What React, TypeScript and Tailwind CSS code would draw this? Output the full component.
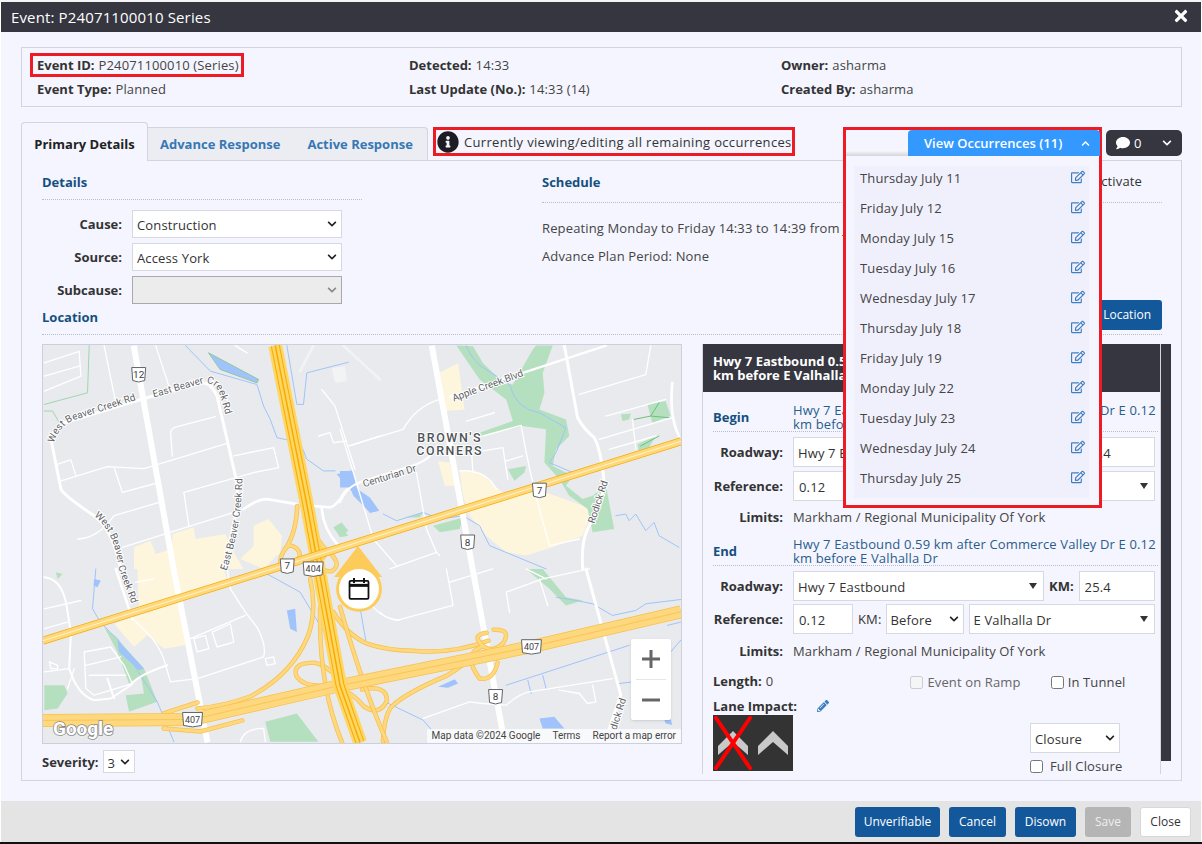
import { ReactNode } from 'react';
import { FaChevronDown, FaChevronUp, FaComment, FaInfoCircle, FaPencilAlt, FaRegEdit, FaTimes } from 'react-icons/fa';

const occurrences = [
    'Thursday July 11',
    'Friday July 12',
    'Monday July 15',
    'Tuesday July 16',
    'Wednesday July 17',
    'Thursday July 18',
    'Friday July 19',
    'Monday July 22',
    'Tuesday July 23',
    'Wednesday July 24',
    'Thursday July 25',
];

const Select = ({ value, arrow = 'chevron', disabled = false, className }: { value: string; arrow?: 'chevron' | 'triangle'; disabled?: boolean; className: string }) => (
    <div className={`relative shrink-0 ${className}`}>
        <select
            disabled={disabled}
            value={value}
            onChange={() => {}}
            className={`w-full h-full appearance-none rounded-none pl-[4px] pt-[2px] outline-none text-[#333] border-[1.5px] ${disabled ? 'bg-[#ececec] border-[#a9a9a9]' : 'bg-white border-[#d6d8e2]'}`}
        >
            <option value={value}>{value}</option>
        </select>
        {arrow === 'chevron' ? (
            <FaChevronDown className={`absolute right-[5px] top-1/2 -translate-y-1/2 pointer-events-none text-[10px] ${disabled ? 'text-[#888]' : 'text-[#222]'}`} />
        ) : (
            <span className="absolute right-[7px] top-1/2 -translate-y-1/2 pointer-events-none w-0 h-0 border-x-[4px] border-x-transparent border-t-[6px] border-t-[#333]" />
        )}
    </div>
);

const TextInput = ({ value, className }: { value: string; className: string }) => (
    <input readOnly value={value} className={`shrink-0 bg-white border-[1.5px] border-[#d6d8e2] px-[5px] pt-[2px] text-[#333] outline-none ${className}`} />
);

const Label = ({ children }: { children: ReactNode }) => (
    <span className="w-[70px] mr-[10px] shrink-0 text-right font-bold tracking-normal text-[#333]">{children}</span>
);

const SectionTitle = ({ children }: { children: ReactNode }) => (
    <span className="font-bold tracking-normal text-[#14507f]">{children}</span>
);

const Field = ({ label, value, className = 'h-[24px]' }: { label: string; value: string; className?: string }) => (
    <div className={`flex items-center ${className}`}>
        <span className="font-bold tracking-normal text-[#333] mr-[4px]">{label}</span>
        <span className="text-[#444]">{value}</span>
    </div>
);

const ActionButton = ({ children, className }: { children: ReactNode; className: string }) => (
    <button className={`h-[30px] rounded-[3px] text-[12px] tracking-normal ${className}`}>{children}</button>
);

// Map drawing. Each group takes coordinates traced at 3x from one part of the map.
const Part = ({ x, y, children }: { x: number; y: number; children: ReactNode }) => (
    <g transform={`translate(${x},${y}) scale(0.3333)`} fill="none" stroke="#fff" strokeWidth={4} strokeLinejoin="round" strokeLinecap="round">
        {children}
    </g>
);

const GREEN = '#b5e0bf';
const WATER = '#a0c3fb';
const URBAN = '#fdf5dc';

const Shield = ({ x, y, label, wide = false }: { x: number; y: number; label: string; wide?: boolean }) => {
    const w = wide ? 10 : 7;
    return (
        <g transform={`translate(${x},${y})`}>
            <path d={`M${-w},-7 H${w} L${w - 1},6 Q0,9 ${-w + 1},6 Z`} fill="#fff" stroke="#5f6368" strokeWidth={1} />
            <text y={3.5} textAnchor="middle" fontSize={wide ? 9 : 10} fill="#3c4043" fontFamily="Roboto, sans-serif">{label}</text>
        </g>
    );
};

const RoadLabel = ({ x, y, angle, children }: { x: number; y: number; angle: number; children: string }) => (
    <text
        transform={`translate(${x},${y}) rotate(${angle})`}
        fontSize={10}
        fill="#5f6368"
        stroke="#fff"
        strokeWidth={2}
        paintOrder="stroke"
        fontFamily="Roboto, sans-serif"
    >
        {children}
    </text>
);

const PathLabel = ({ id, d, children }: { id: string; d: string; children: string }) => (
    <>
        <path id={id} d={d} fill="none" />
        <text fontSize={10} fill="#5f6368" stroke="#fff" strokeWidth={2} paintOrder="stroke" fontFamily="Roboto, sans-serif">
            <textPath href={`#${id}`}>{children}</textPath>
        </text>
    </>
);

const Ramp = ({ d }: { d: string }) => (
    <>
        <path d={d} fill="none" stroke="#f9c04a" strokeWidth={4.5} strokeLinecap="round" />
        <path d={d} fill="none" stroke="#fdd87e" strokeWidth={3} strokeLinecap="round" />
    </>
);

const MapArt = () => (
    <svg viewBox="0 0 640 398" className="block w-full h-full bg-[#e8eaed] tracking-normal">
        <Part x={-2} y={-6}>
            <path d="M395,585 L460,565 L465,600 L555,585 L580,640 L610,690 L280,690 L280,625 L330,605 L345,645 L395,630 Z" fill={URBAN} stroke="none" />
            <path d="M640,560 L685,540 L725,590 L720,640 L670,690 L600,660 L640,620 Z" fill={URBAN} stroke="none" />
            <path d="M875,85 L915,80 L920,125 L885,130 Z" fill="#f1f3f4" stroke="none" />
            <path d="M780,95 L820,18 M910,18 L1020,120" stroke="#f1f3f4" strokeWidth={8} />
            <path d="M145,18 L140,160 L10,195 M10,215 L35,215 L55,250" stroke="#9fd6ac" strokeWidth={3} />
            <path d="M505,40 L655,120 L650,130 L540,90 Z" fill={WATER} stroke="#8fc79c" strokeWidth={3} />
            <path d="M435,18 L510,95 L650,135 L670,200 L690,240 L710,295 L780,310 L800,360 L850,395 L885,395 M740,18 L770,195 L790,195 L800,100 L925,68" stroke={WATER} strokeWidth={3} />
            <path d="M890,405 L935,393 L945,445 L990,475 L1018,515 L990,522 L950,470 L925,445 Z" fill={WATER} stroke="none" />
            <path d="M880,565 L905,550 L925,575 L900,595 Z" fill={GREEN} stroke="none" />
            <path d="M60,425 L200,382 L310,388 L560,312 M395,350 L390,280 Q392,265 410,262 L525,232 M580,350 L700,325 L715,385 L640,400 L430,460 L445,560 M245,625 L580,520 M110,600 Q170,600 220,530 L355,490 M190,18 L225,190 M345,18 L385,140 M220,385 L245,460 L355,430 M10,70 L115,35 L120,110 L10,155 M10,110 L115,80 M845,150 L885,200 L945,390 M930,320 L1020,290 M835,290 L870,280 L880,310 L920,305 M50,375 L90,362 L105,410 M585,18 L620,40" />
            <path d="M30,300 L60,450 Q70,470 160,530 Q215,570 240,690" strokeWidth={9} />
            <path d="M30,300 Q40,265 70,250 L300,180 L480,130 Q510,125 530,170 L585,410 Q600,480 585,530 L550,690" strokeWidth={9} />
            <path d="M610,510 Q650,480 680,480 L770,495 M810,500 L870,505 Q890,500 910,465 Q930,430 1020,415 M845,510 Q850,570 895,620" strokeWidth={8} />
        </Part>
        <Part x={298} y={-6}>
            <path d="M360,395 L420,400 L490,460 L620,460 L760,510 L730,590 L640,625 L560,650 L500,640 L440,590 L390,530 L370,470 Z" fill={URBAN} stroke="none" />
            <path d="M300,100 L355,70 L375,210 L320,215 Z M295,365 L330,370 L345,440 L315,440 Z" fill={URBAN} stroke="none" />
            <path d="M350,18 L400,20 L430,70 L490,130 L520,135 L580,30 L590,18 L640,18 L610,100 L615,160 L600,210 L680,240 L690,290 L650,330 L640,380 L700,410 L680,440 L730,480 L760,470 L800,440 L825,570 L760,580 L745,510 L690,470 L660,420 L615,370 L620,270 L550,260 L430,290 L420,280 L520,245 L500,180 L420,120 Z" fill={GREEN} stroke="none" />
            <path d="M925,195 L980,185 L995,230 L940,250 Z M895,315 L950,290 L930,325 L900,340 Z M505,390 L560,380 L555,400 L525,425 Z M280,560 L370,535 L360,570 L300,580 Z M195,535 L250,520 L240,535 Z M0,560 L25,590 L0,595 Z M845,225 L875,222 L870,240 L850,245 Z" fill={GREEN} stroke="none" />
            <path d="M885,240 L935,230 L960,190 M935,230 L990,235 M905,320 L960,290" stroke="#6cc17f" strokeWidth={3} />
            <path d="M380,18 Q400,70 440,90 L510,135 Q530,210 600,220 L680,265 L650,340 L630,370 L700,400 M130,525 L170,545 L250,520 L300,540 L370,530 L420,560 L450,620 L620,690 M830,530 L860,525 L870,545 L890,525 L920,575 L945,550 L960,590 L1020,625" stroke={WATER} strokeWidth={3} />
            <path d="M0,395 L40,395 L50,445 L115,515 L90,520 L40,470 L30,445 L0,445 Z" fill={WATER} stroke="none" />
            <path d="M25,320 L190,270 Q230,200 300,180 M430,290 L545,258 Q570,400 600,510 L630,620 L720,600 M360,395 Q440,390 470,450 M430,335 L490,325 L505,420 M500,365 L550,350 M720,165 L920,105 L935,18 M380,245 L465,220 M150,690 L290,640 L300,650 M780,300 L1000,235 M810,330 L950,290 M800,230 L980,180 M880,240 L890,330 M0,270 L40,400 L100,600 L170,680 M230,400 L260,570 L290,640 M395,330 L400,400" />
            <path d="M330,172 L800,18" strokeWidth={7} />
            <path d="M0,490 Q20,440 70,425 L230,375 Q270,360 285,330" strokeWidth={6} />
            <path d="M675,18 Q690,100 715,235 Q730,265 765,295 Q785,330 795,430 Q790,490 745,570 Q725,610 730,690" strokeWidth={9} />
            <path d="M1000,130 Q990,230 1020,290" strokeWidth={8} />
        </Part>
        <Part x={-42} y={224}>
            <path d="M410,0 L670,0 L685,45 L415,130 Z M340,165 L530,100 L555,230 L490,240 L440,200 L400,235 Z" fill={URBAN} stroke="none" />
            <path d="M310,175 L350,210 L430,300 L470,400 L385,430 L375,380 L430,375 L420,320 L385,345 L350,250 Z M130,350 L190,350 L200,375 L170,420 L130,425 Z M795,460 L890,435 L955,520 L810,520 Z M165,10 L185,15 L170,30 Z" fill={GREEN} stroke="none" />
            <path d="M350,215 L430,300 L415,305 L355,250 Z M860,125 L885,120 L890,190 L870,180 Z M280,30 L300,35 L290,55 L278,50 Z" fill={WATER} stroke="none" />
            <path d="M285,0 L275,120 Q300,170 350,210 L470,400 L520,520 M800,15 L900,70 L960,170 L1000,240 M1060,0 L1100,230" stroke={WATER} strokeWidth={3} />
            <path d="M130,120 L240,95 M130,180 L200,160 M205,300 L130,310 M250,250 L330,235 L370,290 L395,345 L280,380 L255,360 Z M255,290 L360,265 M265,320 L375,320 M735,140 L570,210 M580,210 L615,200 L625,240 L590,250 Z M635,190 L690,165 L700,220 L650,235 Z M795,270 L820,265 L825,285 L800,290 Z M405,40 L460,30 M720,520 Q730,480 790,480 L795,520 M1120,115 Q1150,150 1200,155 M220,300 L200,360 M145,280 L170,290 L170,300 L150,300 Z M395,150 Q480,220 495,290 L510,340 L590,330 L790,265 Q800,230 770,175 L735,130 L690,60 L680,0" />
            <path d="M130,25 Q180,30 195,100 L210,190 L205,300 Q230,380 280,395 L330,390 L390,350 Q410,320 500,290" strokeWidth={6} />
            <path d="M345,0 L395,150" strokeWidth={8} />
            <path d="M320,330 L340,390" strokeWidth={6} />
        </Part>
        <Part x={338} y={224}>
            <path d="M440,0 L490,0 L560,85 L610,95 L560,110 L510,60 Z" fill={GREEN} stroke="none" />
            <path d="M175,355 L225,332 L235,345 L205,358 Z M480,450 L525,445 L555,480 L490,480 Z M855,452 L875,450 L880,470 L860,465 Z" fill={WATER} stroke="none" />
            <path d="M530,85 L590,95 L640,105 L700,140 L770,125 L800,105 L905,92 M865,170 L905,160 M380,350 L750,230 M445,335 L455,375 M490,320 L500,360 M720,345 L760,340 M875,250 L905,215 M15,400 L130,455 L160,490" stroke={WATER} strokeWidth={3} />
            <path d="M200,0 L220,110 L50,155 Q20,150 0,130 M210,40 L340,0 M380,70 L490,30 L630,0 M380,70 L390,130 M480,30 L505,110 M440,0 L500,30 M130,450 L270,400 L310,405 L380,410 Q420,375 450,370 L700,330 M540,365 L600,375 L625,405 L650,400 L640,350" />
            <path d="M620,0 L725,380 L690,480" strokeWidth={9} />
        </Part>
        {/* white trunk roads */}
        <path d="M91,0 L131,224 L165,398" fill="none" stroke="#fff" strokeWidth={6} />
        <path d="M390,0 L431,224 L463,398" fill="none" stroke="#fff" strokeWidth={6} />
        {/* ramps */}
        <Ramp d="M255,161 Q254,190 241,207 Q232,226 250,219 Q262,212 255,204 Q246,196 241,207" />
        <Ramp d="M266,161 Q270,195 288,208 Q300,220 290,226 Q276,228 280,214 Q284,206 296,204" />
        <Ramp d="M268,234 Q275,265 266,291 Q250,330 208,352 Q180,362 155,364" />
        <Ramp d="M291,267 Q305,290 325,299 Q345,306 371,306 Q410,310 447,296" />
        <Ramp d="M341,397 Q342,375 348,364 Q360,350 405,331 Q420,322 428,314" />
        <Ramp d="M121,384 L158,387 L200,376" />
        <Ramp d="M121,369 L155,358" />
        <Ramp d="M272,318 Q250,318 254,331 Q262,345 296,340 M272,318 Q284,320 296,334" />
        <Ramp d="M320,345 Q345,340 345,356 Q338,372 322,362 Q312,350 300,345" />
        <Ramp d="M452,285 Q470,284 462,298 Q450,310 440,300 Q430,290 445,288 M440,302 Q420,310 438,334 Q452,336 456,318" />
        <Ramp d="M298,262 Q320,340 345,398 M278,262 Q276,340 300,398" />
        {/* 407 */}
        <path d="M0,376 L150,375 L298,341 L490,302 L640,267" fill="none" stroke="#f9c04a" strokeWidth={13} strokeLinejoin="round" />
        <path d="M0,376 L150,375 L298,341 L490,302 L640,267" fill="none" stroke="#fdd87e" strokeWidth={11.5} strokeLinejoin="round" />
        <path d="M0,376 L150,375 L298,341 L490,302 L640,267" fill="none" stroke="#f9c04a" strokeWidth={0.8} />
        {/* 404 */}
        <path d="M233,0 L265,161 L298,341 L318,398" fill="none" stroke="#fdd663" strokeWidth={14} strokeLinejoin="round" />
        <path d="M233,0 L265,161 L298,341 L318,398" fill="none" stroke="#f9ab00" strokeWidth={9} strokeLinejoin="round" />
        <path d="M233,0 L265,161 L298,341 L318,398" fill="none" stroke="#fdd663" strokeWidth={7} strokeLinejoin="round" />
        <path d="M233,0 L265,161 L298,341 L318,398" fill="none" stroke="#f9ab00" strokeWidth={1.5} strokeLinejoin="round" />
        {/* 7 */}
        <path d="M0,296 L640,96" fill="none" stroke="#f9ab00" strokeWidth={8} />
        <path d="M0,296 L640,96" fill="none" stroke="#fdd87e" strokeWidth={6.5} />
        <path d="M0,296 L640,96" fill="none" stroke="#fff3c4" strokeWidth={1} />
        <Shield x={96} y={29} label="12" />
        <Shield x={245} y={221} label="7" />
        <Shield x={271} y={224} label="404" wide />
        <Shield x={498} y={145} label="7" />
        <Shield x={426} y={197} label="8" />
        <Shield x={150} y={375} label="407" wide />
        <Shield x={490} y={302} label="407" wide />
        <Shield x={454} y={352} label="8" />
        <PathLabel id="wbc1" d="M11,98 Q15,82 30,75 L95,54">West Beaver Creek Rd</PathLabel>
        <PathLabel id="ebc1" d="M111,52 L160,38 Q172,36 177,48 L187,82">East Beaver Creek Rd</PathLabel>
        <PathLabel id="ebc2" d="M184,226 Q200,180 200,130">East Beaver Creek Rd</PathLabel>
        <PathLabel id="wbc2" d="M51,171 Q72,186 76,224 L90,262">West Beaver Creek Rd</PathLabel>
        <RoadLabel x={412} y={56} angle={-20}>Apple Creek Blvd</RoadLabel>
        <RoadLabel x={322} y={142} angle={-17}>Centurian Dr</RoadLabel>
        <RoadLabel x={553} y={179} angle={-72}>Rodick Rd</RoadLabel>
        <RoadLabel x={575} y={386} angle={-72}>dick Rd</RoadLabel>
        <g fontFamily="Roboto, sans-serif" fontSize={12.5} fontWeight={500} fill="#4f5357" stroke="#fff" strokeWidth={2} paintOrder="stroke" textAnchor="middle" letterSpacing={1.6}>
            <text x={408} y={97}>BROWN'S</text>
            <text x={408} y={110}>CORNERS</text>
        </g>
        <text x={10} y={391} fontFamily="Roboto, sans-serif" fontSize={19} fontWeight={700} fill="#fff" stroke="#8a8a8a" strokeWidth={1.6} paintOrder="stroke">Google</text>
        {/* event marker */}
        <path d="M316,201 L292,232 H340 Z" fill="#fdcb59" />
        <circle cx={317} cy={244} r={21.5} fill="#fff" stroke="#fdcb59" strokeWidth={3} />
        <g fill="none" stroke="#111" strokeWidth={1.8}>
            <rect x={307.5} y={236} width={19} height={18} rx={1} />
            <path d="M307.5,240.5 H326.5" strokeWidth={3} />
            <path d="M312,233 V238 M322,233 V238" strokeWidth={2} />
        </g>
    </svg>
);

const LaneImage = () => (
    <svg viewBox="0 0 80 56" className="w-[80px] h-[56px] block">
        <rect width={80} height={56} fill="#333" />
        <path d="M5,31 L20,16 L35,31 V40 L20,27 L5,40 Z" fill="#c9c9c9" />
        <path d="M45,31 L60,16 L75,31 V40 L60,27 L45,40 Z" fill="#c9c9c9" />
        <path d="M3,3 L37,53 M37,3 L3,53" stroke="#f00" strokeWidth={4} strokeLinecap="round" />
    </svg>
);

const LocationBlock = ({ title, referenceGap }: { title: string; referenceGap: string }) => (
    <>
        <div className="flex h-[30px] border-b border-dotted border-[#b9bccb]">
            <span className="w-[80px] shrink-0 font-bold tracking-normal text-[#14507f] pt-[7px]">{title}</span>
            <span className="text-[#2a5d8a] leading-[14px] pt-px">Hwy 7 Eastbound 0.59 km after Commerce Valley Dr E 0.12 km before E Valhalla Dr</span>
        </div>
        <div className="flex items-center mt-[5px]">
            <Label>Roadway:</Label>
            <Select value="Hwy 7 Eastbound" arrow="triangle" className="w-[251px] h-[30px]" />
            <span className="font-bold tracking-normal text-[#333] ml-[5px] mr-[5px]">KM:</span>
            <TextInput value="25.4" className="w-[76px] h-[30px]" />
        </div>
        <div className={`flex items-center ${referenceGap}`}>
            <Label>Reference:</Label>
            <TextInput value="0.12" className="w-[60px] h-[30px]" />
            <span className="text-[#333] ml-[5px] mr-[4px]">KM:</span>
            <Select value="Before" className="w-[78px] h-[30px]" />
            <Select value="E Valhalla Dr" arrow="triangle" className="w-[186px] h-[30px] ml-[5px]" />
        </div>
    </>
);

const LimitsRow = ({ className }: { className: string }) => (
    <div className={`flex items-center h-[16px] ${className}`}>
        <Label>Limits:</Label>
        <span className="text-[#444]">Markham / Regional Municipality Of York</span>
    </div>
);

export default function App() {
    return (
        <div className="w-[1202px] h-[844px] overflow-hidden bg-white font-['Open_Sans',sans-serif] text-[13px] leading-[16px] tracking-[0.14px] text-[#333]">
            <div className="h-[2px] bg-[#f4f4f4]" />
            <div className="ml-[1px] mr-[1px] h-[840px] flex flex-col">
                <div className="h-[30px] shrink-0 bg-[#353640] pl-[10px] pr-[11px] flex items-center justify-between text-white">
                    <span className="text-[15px]">Event: P24071100010 Series</span>
                    <FaTimes className="text-[18px] -mt-[3px]" />
                </div>

                <div className="h-[769px] shrink-0 bg-[#f4f5fe] pl-[20px] pr-[19px] pt-[15px]">
                    <div className="h-[60px] border border-[#d2d4e0] grid grid-cols-[372px_372px_1fr] pl-[15px] pt-[5px]">
                        <div>
                            <Field label="Event ID:" value="P24071100010 (Series)" className="w-[214px] h-[24px] -ml-[7px] px-[4px] border-[3px] border-[#ed1c24] whitespace-nowrap" />
                            <Field label="Event Type:" value="Planned" />
                        </div>
                        <div>
                            <Field label="Detected:" value="14:33" />
                            <Field label="Last Update (No.):" value="14:33 (14)" />
                        </div>
                        <div>
                            <Field label="Owner:" value="asharma" />
                            <Field label="Created By:" value="asharma" />
                        </div>
                    </div>

                    <div className="relative mt-[15px] h-[38px] flex items-end">
                        <div className="relative z-10 -mb-px w-[127px] h-[39px] bg-[#f4f5fe] border border-b-0 border-[#d2d4e0] rounded-t-[4px] flex items-center justify-center pt-[4px] font-bold tracking-normal text-[#222]">
                            Primary Details
                        </div>
                        <div className="w-[280px] h-[33px] bg-[#ecedf3] border-t border-r border-[#d2d4e0] rounded-tr-[4px] flex items-center font-bold tracking-normal text-[#3678b4] pl-[12px] gap-[27px]">
                            <span>Advance Response</span>
                            <span>Active Response</span>
                        </div>
                        <div className="self-start mt-[5px] ml-[5px] w-[362px] h-[29px] border-[3px] border-[#ed1c24] flex items-center gap-[5px] pl-[1px] pt-px tracking-[0.33px] text-[#333]">
                            <FaInfoCircle className="text-[22px] text-[#1c1c22] shrink-0" />
                            <span>Currently viewing/editing all remaining occurrences</span>
                        </div>

                        {/* occurrences menu, open over the tab content */}
                        <div className="absolute z-20 left-[822px] top-[5px] w-[259px] h-[381px] border-[3px] border-[#ed1c24] bg-[#f4f5fe] flex flex-col">
                            <div className="flex justify-end shrink-0 bg-gradient-to-b from-transparent from-80% to-[#d5d5d8]">
                                <div className="w-[192px] h-[26px] -mr-px bg-[#3399ff] rounded-t-[4px] text-white font-semibold tracking-normal flex items-center pl-[16px]">
                                    <span>View Occurrences (11)</span>
                                    <FaChevronUp className="ml-auto mr-[10px] text-[9px]" />
                                </div>
                            </div>
                            <div className="mt-[10px] ml-[8px] w-[235px] bg-[#f0f0fc] pb-[2px]">
                                {occurrences.map((day) => (
                                    <div key={day} className="h-[30px] flex justify-between pt-[4px] pl-[6px] pr-[4px] text-[#444]">
                                        <span>{day}</span>
                                        <FaRegEdit className="text-[14px] text-[#3f7fc0]" />
                                    </div>
                                ))}
                            </div>
                        </div>

                        <div className="absolute right-0 top-[8px] w-[76px] h-[26px] bg-[#353640] rounded-[5px] text-white flex items-center pl-[10px]">
                            <FaComment className="text-[14px]" />
                            <span className="ml-[4px]">0</span>
                            <FaChevronDown className="ml-auto mr-[10px] text-[10px]" />
                        </div>
                    </div>

                    <div className="h-[621px] border border-[#d2d4e0] pl-[20px] pr-[8px]">
                        <div className="h-[148px] flex">
                            <div className="w-[320px] shrink-0">
                                <div className="h-[39px] border-b border-dotted border-[#b9bccb] flex items-end pb-[9px]">
                                    <SectionTitle>Details</SectionTitle>
                                </div>
                                <div className="mt-[10px] flex flex-col gap-[5px]">
                                    <div className="flex items-center">
                                        <span className="w-[80px] mr-[10px] text-right font-bold tracking-normal">Cause:</span>
                                        <Select value="Construction" className="w-[210px] h-[28px]" />
                                    </div>
                                    <div className="flex items-center">
                                        <span className="w-[80px] mr-[10px] text-right font-bold tracking-normal">Source:</span>
                                        <Select value="Access York" className="w-[210px] h-[28px]" />
                                    </div>
                                    <div className="flex items-center">
                                        <span className="w-[80px] mr-[10px] text-right font-bold tracking-normal">Subcause:</span>
                                        <Select value="" disabled className="w-[210px] h-[28px]" />
                                    </div>
                                </div>
                            </div>
                            <div className="ml-[180px] w-[620px] shrink-0">
                                <div className="h-[42px] border-b border-dotted border-[#b9bccb] flex items-start justify-between pt-[13px]">
                                    <SectionTitle>Schedule</SectionTitle>
                                    <span className="mr-[20px] -mt-[1px]">Activate</span>
                                </div>
                                <div className="mt-[17px] text-[#444] whitespace-nowrap">Repeating Monday to Friday 14:33 to 14:39 from July 11</div>
                                <div className="mt-[12px] text-[#444]">Advance Plan Period: None</div>
                            </div>
                        </div>
                        <div className="h-[26px] w-[1120px] border-b border-dotted border-[#b9bccb] flex items-end justify-between">
                            <span className="pb-[9px]"><SectionTitle>Location</SectionTitle></span>
                            <button className="w-[100px] h-[30px] mb-[4px] bg-[#14589c] rounded-[3px] text-white text-[12px] tracking-normal text-right pr-[11px]">Location</button>
                        </div>

                        <div className="mt-[9px] flex">
                            <div className="w-[640px] shrink-0">
                                <div className="relative h-[400px] border border-[#cdd0dc]">
                                    <MapArt />
                                    <div className="absolute right-[10px] bottom-[23px] w-[40px] h-[81px] bg-white rounded-[2px] shadow flex flex-col items-center text-[#666]">
                                        <span className="h-[40px] flex items-center justify-center">
                                            <svg width="18" height="18" viewBox="0 0 18 18"><path d="M7.5,0 H10.5 V7.5 H18 V10.5 H10.5 V18 H7.5 V10.5 H0 V7.5 H7.5 Z" fill="#666" /></svg>
                                        </span>
                                        <span className="w-[30px] h-px bg-[#e6e6e6]" />
                                        <span className="h-[40px] flex items-center justify-center">
                                            <svg width="18" height="18" viewBox="0 0 18 18"><path d="M0,7.5 H18 V10.5 H0 Z" fill="#666" /></svg>
                                        </span>
                                    </div>
                                    <div className="absolute right-0 bottom-0 h-[14px] flex items-center bg-white/70 text-[10px] tracking-normal text-[#444] font-['Roboto',sans-serif] px-[5px] gap-[12px] whitespace-nowrap">
                                        <span>Map data ©2024 Google</span>
                                        <span>Terms</span>
                                        <span>Report a map error</span>
                                    </div>
                                </div>
                                <div className="mt-[6px] flex items-center">
                                    <span className="font-bold tracking-normal mr-[4px]">Severity:</span>
                                    <Select value="3" className="w-[32px] h-[23px]" />
                                </div>
                            </div>

                            <div className="ml-[20px] w-[470px] h-[430px] shrink-0 flex border-l border-[#d2d4e0] overflow-hidden">
                                <div className="w-[458px] shrink-0 border-r border-[#d2d4e0]">
                                    <div className="h-[48px] bg-[#353640] text-white font-bold tracking-normal leading-[14px] pl-[10px] pr-[6px] flex items-center">
                                        <span>
                                            Hwy 7 Eastbound 0.59 km after Commerce Valley Dr E 0.12
                                            <br />
                                            km before E Valhalla Dr
                                        </span>
                                    </div>
                                    <div className="pl-[10px] pr-[2px] pt-[10px]">
                                        <LocationBlock title="Begin" referenceGap="mt-[4px]" />
                                        <LimitsRow className="mt-[8px]" />
                                        <div className="h-[11px]" />
                                        <LocationBlock title="End" referenceGap="mt-[3px]" />
                                        <LimitsRow className="mt-[9px]" />
                                        <div className="mt-[13px] h-[18px] flex items-center">
                                            <span className="font-bold tracking-normal">Length:</span>
                                            <span className="ml-[4px] text-[#444]">0</span>
                                            <label className="ml-[137px] pt-[2px] flex items-center gap-[4px] text-[#666]">
                                                <input type="checkbox" disabled className="w-[13px] h-[13px]" />
                                                Event on Ramp
                                            </label>
                                            <label className="ml-[30px] pt-[2px] flex items-center gap-[4px] text-[#444]">
                                                <input type="checkbox" className="w-[13px] h-[13px]" />
                                                In Tunnel
                                            </label>
                                        </div>
                                        <div className="mt-[8px] h-[16px] flex items-center">
                                            <span className="font-bold tracking-normal">Lane Impact:</span>
                                            <FaPencilAlt className="ml-[20px] text-[12px] text-[#3f7fc0]" />
                                        </div>
                                        <div className="mt-px flex justify-between">
                                            <LaneImage />
                                            <div className="w-[128px] pt-[8px]">
                                                <Select value="Closure" className="w-[90px] h-[30px]" />
                                                <label className="mt-[5px] flex items-center gap-[7px] text-[#444]">
                                                    <input type="checkbox" className="w-[13px] h-[13px]" />
                                                    Full Closure
                                                </label>
                                            </div>
                                        </div>
                                    </div>
                                </div>
                                <div className="w-[10px] h-[417px] shrink-0 bg-[#353640]" />
                            </div>
                        </div>
                    </div>
                </div>

                <div className="h-[41px] shrink-0 bg-[#e4e4e4] flex items-center justify-end gap-[9px] pr-[10px] pt-px">
                    <ActionButton className="w-[85px] bg-[#14589c] text-white">Unverifiable</ActionButton>
                    <ActionButton className="w-[57px] bg-[#14589c] text-white">Cancel</ActionButton>
                    <ActionButton className="w-[61px] bg-[#14589c] text-white">Disown</ActionButton>
                    <ActionButton className="w-[46px] bg-[#b5b5b5] text-[#eee]">Save</ActionButton>
                    <ActionButton className="w-[51px] bg-white border border-[#d8d8d8] text-[#333]">Close</ActionButton>
                </div>
            </div>
            <div className="h-[2px] bg-[#111]" />
        </div>
    );
}
